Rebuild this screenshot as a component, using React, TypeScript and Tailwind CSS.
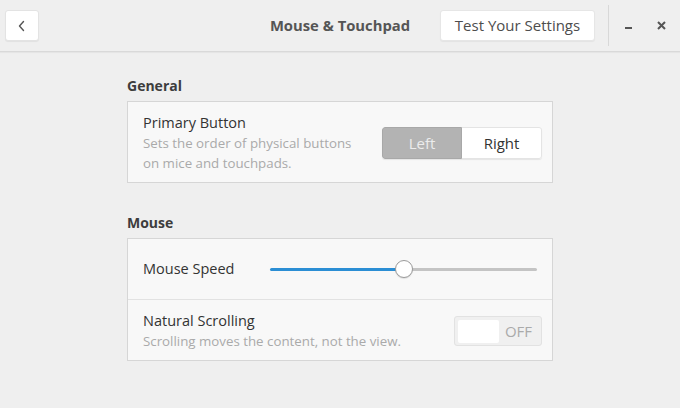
import React from "react";

const font = { fontFamily: '"Open Sans", "Noto Sans", sans-serif' };

function BackButton() {
  return (
    <button className="w-[34px] h-[31px] flex items-center justify-center bg-white rounded-[3px] border border-[#e3e3e3] shadow-[0_1px_1px_rgba(0,0,0,0.06)]">
      <svg width="10" height="12" viewBox="0 0 10 12" fill="none">
        <path d="M6.5 1.5 L2.5 6 L6.5 10.5" stroke="#555" strokeWidth="1.4" strokeLinecap="round" strokeLinejoin="round" />
      </svg>
    </button>
  );
}

export default function App() {
  return (
    <div style={font} className="w-[680px] h-[408px] bg-[#efefef] text-[#333] overflow-hidden">
      <header className="h-[52px] grid grid-cols-[1fr_auto_1fr] items-center border-b border-[#d9d9d9] shadow-[0_1px_1px_rgba(0,0,0,0.04)]">
        <div className="pl-[5px] flex items-center">
          <BackButton />
        </div>
        <h1 className="text-[14.8px] font-bold text-[#555]">Mouse &amp; Touchpad</h1>
        <div className="flex items-center justify-end h-full">
          <button className="h-[31px] w-[155px] bg-white rounded-[3px] border border-[#e6e6e6] text-[15px] text-[#4d4d4d] shadow-[0_1px_1px_rgba(0,0,0,0.05)]">
            Test Your Settings
          </button>
          <div className="ml-[13px] w-px h-[41px] bg-[#d8d8d8]" />
          <div className="w-[38px] flex items-center justify-center">
            <div className="w-[7px] h-[2px] bg-[#555] mt-[4px]" />
          </div>
          <div className="w-[28px] flex items-center justify-center">
            <svg width="9" height="9" viewBox="0 0 9 9">
              <path d="M1 1 L8 8 M8 1 L1 8" stroke="#555" strokeWidth="2" />
            </svg>
          </div>
          <div className="w-[5px]" />
        </div>
      </header>

      <main className="w-[426px] mx-auto pt-[24px]">
        <h2 className="text-[14px] leading-[19px] font-bold text-[#3d3d3d] mb-[6px]">General</h2>
        <section className="bg-[#f8f8f8] border border-[#d6d6d6] flex items-center justify-between pl-[15px] pr-[10px] pt-[11px] pb-[9px]">
          <div>
            <div className="text-[14.5px] leading-[20px]">Primary Button</div>
            <div className="text-[13.3px] leading-[20px] text-[#aaa]">
              Sets the order of physical buttons
              <br />
              on mice and touchpads.
            </div>
          </div>
          <div className="flex h-[32px] rounded-[3px] shadow-[0_1px_1px_rgba(0,0,0,0.08)] overflow-hidden">
            <div className="w-[80px] flex items-center justify-center bg-[#b3b3b3] border border-[#a8a8a8] rounded-l-[3px] text-[15px] text-[#ececec]">
              Left
            </div>
            <div className="w-[80px] flex items-center justify-center bg-white border border-l-0 border-[#e4e4e4] rounded-r-[3px] text-[15px] text-[#333]">
              Right
            </div>
          </div>
        </section>

        <h2 className="text-[14px] leading-[19px] font-bold text-[#3d3d3d] mt-[30px] mb-[6px]">Mouse</h2>
        <section className="bg-[#f8f8f8] border border-[#d6d6d6]">
          <div className="h-[60px] flex items-center pl-[15px] pr-[15px]">
            <div className="w-[127px] text-[14.5px]">Mouse Speed</div>
            <div className="flex-1 relative h-[18px] flex items-center">
              <div className="h-[3px] w-[134px] bg-[#2b8ed4] rounded-l-full" />
              <div className="h-[3px] flex-1 bg-[#c4c4c4] rounded-r-full" />
              <div className="absolute left-[125px] top-0 w-[18px] h-[18px] rounded-full bg-white border border-[#9a9a9a] shadow-[0_1px_1px_rgba(0,0,0,0.1)]" />
            </div>
          </div>
          <div className="border-t border-[#e2e2e2] flex items-center justify-between pl-[15px] pr-[10px] pt-[11px] pb-[9px]">
            <div>
              <div className="text-[14.5px] leading-[20px]">Natural Scrolling</div>
              <div className="text-[13.3px] leading-[20px] text-[#aaa]">Scrolling moves the content, not the view.</div>
            </div>
            <div className="w-[88px] h-[30px] rounded-[3px] border border-[#e2e2e2] bg-[#f0f0f0] flex items-center p-[3px]">
              <div className="w-[41px] h-[23px] bg-white rounded-[2px]" />
              <div className="flex-1 text-center text-[15px] text-[#aaa]">OFF</div>
            </div>
          </div>
        </section>
      </main>
    </div>
  );
}
